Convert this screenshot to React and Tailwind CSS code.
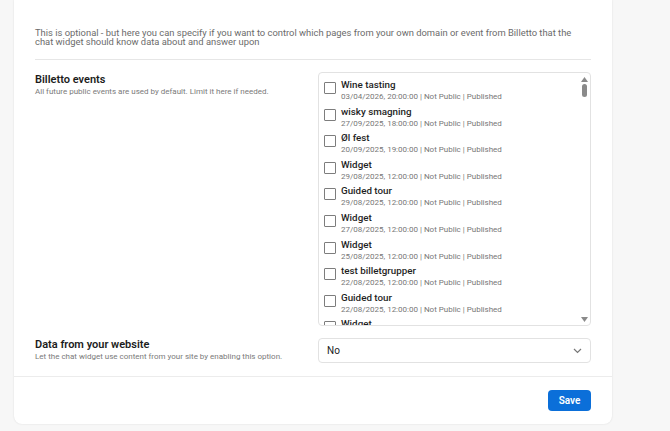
import React from "react";

const events = [
  ["Wine tasting", "03/04/2026, 20:00:00 | Not Public | Published"],
  ["wisky smagning", "27/09/2025, 18:00:00 | Not Public | Published"],
  ["Øl fest", "20/09/2025, 19:00:00 | Not Public | Published"],
  ["Widget", "29/08/2025, 12:00:00 | Not Public | Published"],
  ["Guided tour", "29/08/2025, 12:00:00 | Not Public | Published"],
  ["Widget", "27/08/2025, 12:00:00 | Not Public | Published"],
  ["Widget", "25/08/2025, 12:00:00 | Not Public | Published"],
  ["test billetgrupper", "22/08/2025, 12:00:00 | Not Public | Published"],
  ["Guided tour", "22/08/2025, 12:00:00 | Not Public | Published"],
  ["Widget", "20/08/2025, 12:00:00 | Not Public | Published"],
];

export default function App() {
  return (
    <div
      className="w-[670px] h-[431px] bg-[#f7f7f7] overflow-hidden"
      style={{ fontFamily: "Roboto, 'Liberation Sans', sans-serif" }}
    >
      <div className="ml-[14px] w-[598px] h-[424px] bg-white rounded-b-[8px] shadow-[0_0_2px_rgba(0,0,0,0.12)] flex flex-col">
        <div className="px-[21px] pt-[28px]">
          <p className="text-[9.4px] leading-[9px] text-[#6b6b6b]">
            This is optional - but here you can specify if you want to control which pages from your own domain or event from Billetto that the chat widget should know data about and answer upon
          </p>
          <div className="mt-[13px] h-px bg-[#e6e6e6]" />
          <div className="mt-[12px] flex">
            <div className="w-[283px]">
              <div className="text-[11px] leading-[15px] font-semibold text-[#1c1c1c]">Billetto events</div>
              <div className="text-[8px] leading-[10px] text-[#7a7a7a]">
                All future public events are used by default. Limit it here if needed.
              </div>
            </div>
            <div className="w-[273px] h-[254px] border border-[#e2e2e2] rounded-[4px] flex overflow-hidden">
              <div className="flex-1 overflow-hidden pl-[5px] pt-[6px]">
                {events.map(([t, s], i) => (
                  <div key={i} className="flex h-[26.6px]">
                    <div className="mt-[3px] w-[12px] h-[12px] border border-[#7d7d7d] rounded-[1px] bg-white shrink-0" />
                    <div className="ml-[5px]">
                      <div className="text-[9.8px] leading-[12px] font-medium text-[#1f1f1f]">{t}</div>
                      <div className="text-[8px] leading-[12px] text-[#777]">{s}</div>
                    </div>
                  </div>
                ))}
              </div>
              <div className="w-[11px] flex flex-col items-center pt-[3px] pb-[3px]">
                <svg width="7" height="5" viewBox="0 0 7 5" className="mt-[1px]">
                  <path d="M3.5 0 L7 5 L0 5 Z" fill="#8a8a8a" />
                </svg>
                <div className="mt-[2px] w-[5px] h-[13px] rounded-full bg-[#8a8a8a]" />
                <div className="flex-1" />
                <svg width="7" height="5" viewBox="0 0 7 5">
                  <path d="M0 0 L7 0 L3.5 5 Z" fill="#8a8a8a" />
                </svg>
              </div>
            </div>
          </div>
          <div className="mt-[11px] flex">
            <div className="w-[283px] pt-[0px]">
              <div className="text-[11px] leading-[15px] font-semibold text-[#1c1c1c]">Data from your website</div>
              <div className="text-[8px] leading-[10px] text-[#7a7a7a]">
                Let the chat widget use content from your site by enabling this option.
              </div>
            </div>
            <div className="mt-[1px] w-[273px] h-[25px] border border-[#e2e2e2] rounded-[4px] flex items-center justify-between pl-[8px] pr-[8px]">
              <span className="text-[10px] text-[#222]">No</span>
              <svg width="9" height="6" viewBox="0 0 9 6">
                <path d="M1 1 L4.5 4.5 L8 1" stroke="#777" strokeWidth="1.2" fill="none" />
              </svg>
            </div>
          </div>
        </div>
        <div className="mt-[13px] h-px bg-[#ececec]" />
        <div className="flex justify-end px-[21px] pt-[13px]">
          <button className="w-[43px] h-[21px] bg-[#0b6fd9] rounded-[4px] text-white text-[10px] font-semibold">
            Save
          </button>
        </div>
      </div>
    </div>
  );
}
